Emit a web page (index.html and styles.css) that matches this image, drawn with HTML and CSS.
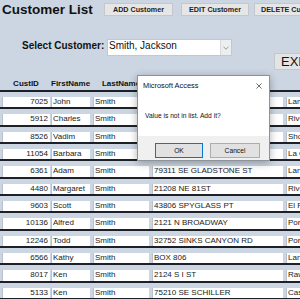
FILE: index.html
```html
<!DOCTYPE html>
<html lang="en">
<head>
    <meta charset="UTF-8">
    <meta name="viewport" content="width=device-width, initial-scale=1.0">
    <title>Customer List</title>
    <link rel="stylesheet" href="styles.css">
</head>
<body>
    <div class="page">
        <div class="topbar">
            <h1 class="title">Customer List</h1>
            <button class="cmd cmd-add">ADD Customer</button>
            <button class="cmd cmd-edit">EDIT Customer</button>
            <button class="cmd cmd-delete">DELETE Customer</button>
        </div>

        <div class="controls">
            <label class="select-label" for="customer">Select Customer:</label>
            <div class="combo" id="customer">
                <span class="combo-text">Smith, Jackson</span>
                <span class="combo-arrow">
                    <svg width="6" height="4" viewBox="0 0 6 4"><polyline points="0.5,0.8 3,3.2 5.5,0.8" fill="none" stroke="#8a8f96" stroke-width="0.9"/></svg>
                </span>
            </div>
            <button class="exit">EXIT</button>
        </div>

        <div class="list-head">
            <div class="col col-id">CustID</div>
            <div class="col col-first">FirstName</div>
            <div class="col col-last">LastName</div>
            <div class="col col-addr">Address</div>
            <div class="col col-city">City</div>
        </div>

        <div class="list">
            <div class="row"><div class="cell col-id">7025</div><div class="cell col-first">John</div><div class="cell col-last">Smith</div><div class="cell col-addr">1404 W 2ND ST</div><div class="cell col-city">Lamar</div></div>
            <div class="row"><div class="cell col-id">5912</div><div class="cell col-first">Charles</div><div class="cell col-last">Smith</div><div class="cell col-addr">615 E MAIN ST</div><div class="cell col-city">Riverton</div></div>
            <div class="row"><div class="cell col-id">8526</div><div class="cell col-first">Vadim</div><div class="cell col-last">Smith</div><div class="cell col-addr">PO BOX 112</div><div class="cell col-city">Shoshoni</div></div>
            <div class="row"><div class="cell col-id">11054</div><div class="cell col-first">Barbara</div><div class="cell col-last">Smith</div><div class="cell col-addr">88 ELM AVE</div><div class="cell col-city">La Grange</div></div>
            <div class="row"><div class="cell col-id">6361</div><div class="cell col-first">Adam</div><div class="cell col-last">Smith</div><div class="cell col-addr">79311 SE GLADSTONE ST</div><div class="cell col-city">Lander</div></div>
            <div class="row"><div class="cell col-id">4480</div><div class="cell col-first">Margaret</div><div class="cell col-last">Smith</div><div class="cell col-addr">21208 NE 81ST</div><div class="cell col-city">Riverton</div></div>
            <div class="row"><div class="cell col-id">9603</div><div class="cell col-first">Scott</div><div class="cell col-last">Smith</div><div class="cell col-addr">43806 SPYGLASS PT</div><div class="cell col-city">El Paso</div></div>
            <div class="row"><div class="cell col-id">10136</div><div class="cell col-first">Alfred</div><div class="cell col-last">Smith</div><div class="cell col-addr">2121 N BROADWAY</div><div class="cell col-city">Portland</div></div>
            <div class="row"><div class="cell col-id">12246</div><div class="cell col-first">Todd</div><div class="cell col-last">Smith</div><div class="cell col-addr">32752 SINKS CANYON RD</div><div class="cell col-city">Portland</div></div>
            <div class="row"><div class="cell col-id">6566</div><div class="cell col-first">Kathy</div><div class="cell col-last">Smith</div><div class="cell col-addr">BOX 806</div><div class="cell col-city">Lander</div></div>
            <div class="row"><div class="cell col-id">8017</div><div class="cell col-first">Ken</div><div class="cell col-last">Smith</div><div class="cell col-addr">2124 S I ST</div><div class="cell col-city">Rawlins</div></div>
            <div class="row"><div class="cell col-id">5133</div><div class="cell col-first">Ken</div><div class="cell col-last">Smith</div><div class="cell col-addr">75210 SE SCHILLER</div><div class="cell col-city">Casper</div></div>
        </div>

        <!-- message box over the form -->
        <div class="dialog">
            <div class="dialog-title">
                <span>Microsoft Access</span>
                <svg class="dialog-close" width="6" height="6" viewBox="0 0 6 6"><path d="M0.4 0.4 L5.6 5.6 M5.6 0.4 L0.4 5.6" stroke="#333" stroke-width="0.7"/></svg>
            </div>
            <div class="dialog-body">Value is not in list. Add it?</div>
            <div class="dialog-foot">
                <button class="dlg-btn dlg-ok">OK</button>
                <button class="dlg-btn">Cancel</button>
            </div>
        </div>
    </div>
</body>
</html>
```

FILE: styles.css
```css
body {
    margin: 0;
    font-family: "Liberation Sans", Arial, sans-serif;
    background-color: #cbd6e2;
    color: #111;
    overflow: hidden;
}
.page {
    position: relative;
    width: 300px;
    height: 299px;
    overflow: hidden;
}
.topbar {
    display: flex;
    align-items: flex-start;
    padding: 2px 0 0 2px;
    height: 16px;
}
.title {
    flex-shrink: 0;
    width: 102px;
    margin: 0;
    font-size: 13.5px;
    line-height: 16px;
    font-weight: bold;
    white-space: nowrap;
}
.cmd {
    flex-shrink: 0;
    height: 13px;
    margin-top: 1px;
    padding: 0;
    background-color: #e6e6e6;
    border: 1px solid #c4c8cd;
    font-family: "Liberation Sans", Arial, sans-serif;
    font-size: 7.2px;
    font-weight: bold;
    color: #222;
    white-space: nowrap;
}
.cmd-add {
    width: 69px;
}
.cmd-edit {
    width: 68px;
    margin-left: 8px;
}
.cmd-delete {
    width: 80px;
    margin-left: 5px;
    text-align: left;
    padding-left: 6px;
}
.controls {
    display: flex;
    height: 31px;
    margin-top: 21px;
    padding-left: 22px;
}
.select-label {
    flex-shrink: 0;
    width: 85px;
    font-size: 10px;
    font-weight: bold;
    line-height: 13px;
    white-space: nowrap;
}
.combo {
    flex-shrink: 0;
    display: flex;
    width: 125px;
    height: 17px;
    box-sizing: border-box;
    background-color: #fff;
    border: 1px solid #c2c8cf;
}
.combo-text {
    flex: 1;
    padding-left: 1px;
    font-size: 10px;
    line-height: 12px;
    color: #111;
}
.combo-arrow {
    display: flex;
    align-items: center;
    justify-content: center;
    width: 10px;
    background-color: #eceef0;
    border-left: 1px solid #d6dadf;
}
.exit {
    flex-shrink: 0;
    align-self: flex-end;
    width: 40px;
    height: 17px;
    margin-left: 42px;
    padding: 0 0 0 6px;
    text-align: left;
    background-color: #e4e4e4;
    border: 1px solid #c4c8cd;
    font-family: "Liberation Sans", Arial, sans-serif;
    font-size: 13px;
    line-height: 15px;
    color: #111;
}
.list-head {
    display: flex;
    height: 20px;
    padding: 0 0 0 2px;
    border-bottom: 2px solid #1d2127;
}
.list-head .col {
    padding-top: 9px;
    font-size: 8px;
    font-weight: bold;
    line-height: 10px;
    text-align: center;
    white-space: nowrap;
}
.row {
    display: flex;
    box-sizing: border-box;
    height: 17.33px;
    padding: 5px 0 0 2px;
    border-bottom: 2px solid #1d2127;
}
.cell {
    box-sizing: border-box;
    height: 10.33px;
    background-color: #fff;
    border-left: 1px solid #b9c1ca;
    font-size: 8px;
    line-height: 10.33px;
    color: #1a1a1a;
    white-space: nowrap;
    overflow: hidden;
}
.col-id {
    flex-shrink: 0;
    width: 48px;
}
.col-first {
    flex-shrink: 0;
    width: 39px;
    margin-left: 1px;
}
.col-last {
    flex-shrink: 0;
    width: 56px;
    margin-left: 3px;
}
.col-addr {
    flex-shrink: 0;
    width: 131px;
    margin-left: 3px;
}
.col-city {
    flex-shrink: 0;
    width: 60px;
    margin-left: 3px;
}
.cell.col-id {
    text-align: right;
    padding-right: 2px;
}
.cell.col-first,
.cell.col-last,
.cell.col-addr,
.cell.col-city {
    padding-left: 1px;
}
.dialog {
    position: absolute;
    left: 137px;
    top: 75px;
    width: 133px;
    height: 86px;
    box-sizing: border-box;
    display: flex;
    flex-direction: column;
    background-color: #fff;
    border: 1px solid #8e9399;
    box-shadow: 0 2px 8px rgba(0, 0, 0, 0.3);
    font-family: "Liberation Sans", Arial, sans-serif;
    color: #111;
}
.dialog-title {
    display: flex;
    align-items: center;
    justify-content: space-between;
    height: 19px;
    padding: 0 7px 0 5px;
    font-size: 7.4px;
}
.dialog-body {
    flex: 1;
    padding: 16px 0 0 7px;
    font-size: 6.7px;
    line-height: 10px;
}
.dialog-foot {
    display: flex;
    justify-content: flex-end;
    gap: 7px;
    height: 24px;
    padding: 7px 9px 0 0;
    box-sizing: border-box;
    background-color: #f0f0f0;
}
.dlg-btn {
    width: 50px;
    height: 15px;
    padding: 0;
    background-color: #e1e1e1;
    border: 1px solid #adadad;
    font-family: "Liberation Sans", Arial, sans-serif;
    font-size: 6.7px;
    color: #111;
}
.dlg-ok {
    width: 48px;
    border-color: #0078d7;
}
```
